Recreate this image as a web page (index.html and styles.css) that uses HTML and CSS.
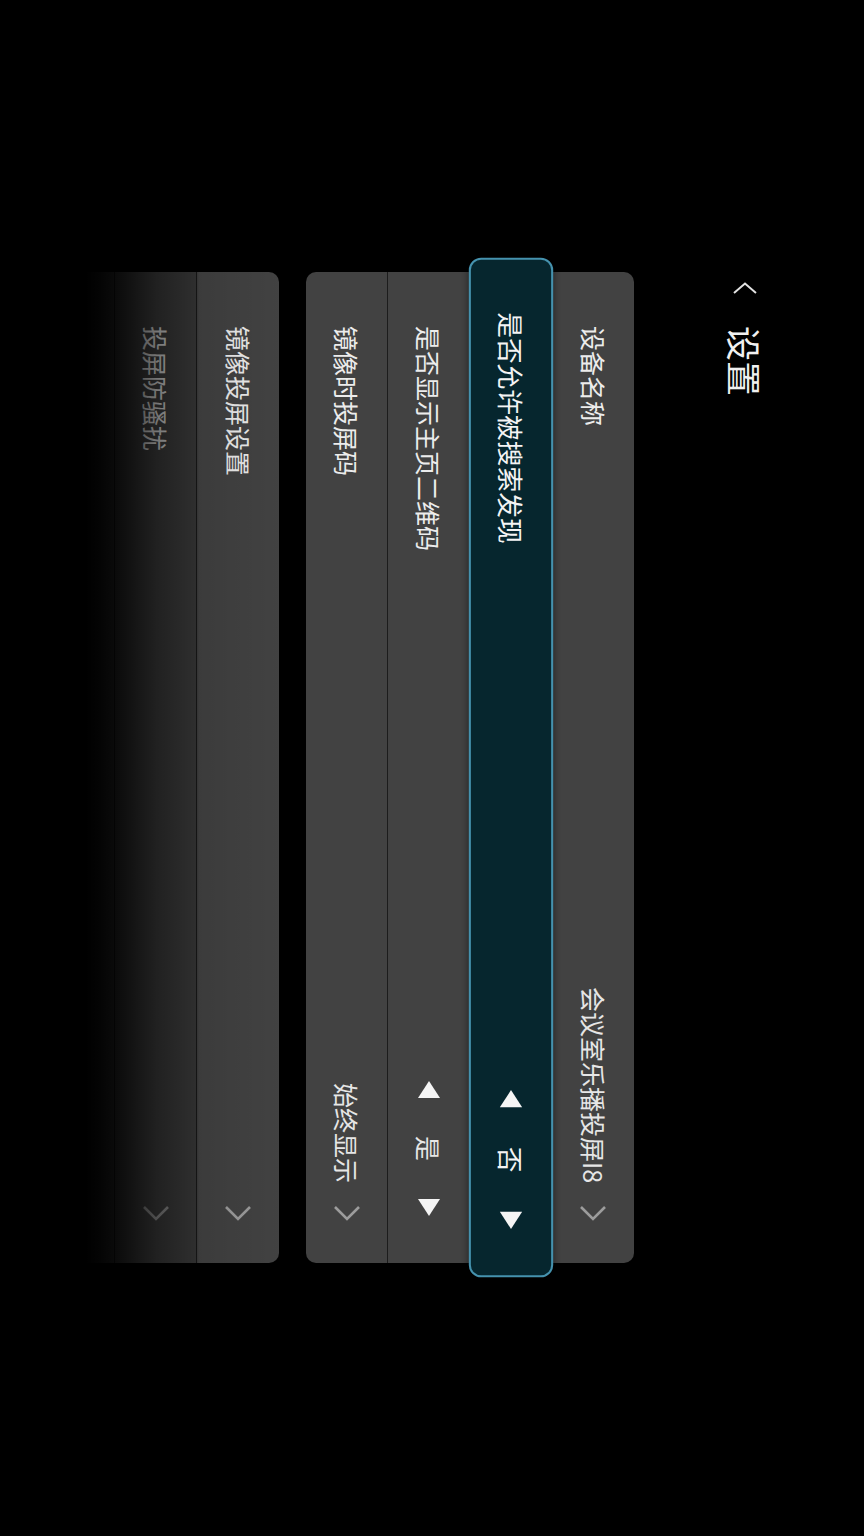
FILE: index.html
```html
<!DOCTYPE html>
<html lang="zh-CN">
<head>
<meta charset="utf-8">
<title>设置</title>
<link rel="stylesheet" href="styles.css">
</head>
<body>
<div class="screen">
  <header class="header">
    <svg class="back" viewBox="0 0 24 12" width="24" height="12"><path d="M1 11 L12 1.5 L23 11"/></svg>
    <h1 class="title">设置</h1>
  </header>

  <section class="group">
    <div class="row">
      <span class="label">设备名称</span>
      <div class="value-wrap">
        <span class="value">会议室乐播投屏I8</span>
        <svg class="chev" viewBox="0 0 28 16" width="28" height="16"><path d="M2 2 L14 14 L26 2"/></svg>
      </div>
    </div>
    <div class="row focused">
      <span class="label">是否允许被搜索发现</span>
      <div class="selector">
        <svg class="tri" viewBox="0 0 22 17" width="22" height="17"><polygon points="0,17 22,17 11,0"/></svg>
        <span class="value">否</span>
        <svg class="tri" viewBox="0 0 22 17" width="22" height="17"><polygon points="0,0 22,0 11,17"/></svg>
      </div>
    </div>
    <div class="row">
      <span class="label">是否显示主页二维码</span>
      <div class="selector">
        <svg class="tri" viewBox="0 0 22 17" width="22" height="17"><polygon points="0,17 22,17 11,0"/></svg>
        <span class="value">是</span>
        <svg class="tri" viewBox="0 0 22 17" width="22" height="17"><polygon points="0,0 22,0 11,17"/></svg>
      </div>
    </div>
    <div class="row">
      <span class="label">镜像时投屏码</span>
      <div class="value-wrap">
        <span class="value">始终显示</span>
        <svg class="chev" viewBox="0 0 28 16" width="28" height="16"><path d="M2 2 L14 14 L26 2"/></svg>
      </div>
    </div>
  </section>

  <section class="group group-2">
    <div class="row">
      <span class="label">镜像投屏设置</span>
      <div class="value-wrap">
        <svg class="chev" viewBox="0 0 28 16" width="28" height="16"><path d="M2 2 L14 14 L26 2"/></svg>
      </div>
    </div>
    <div class="row">
      <span class="label">投屏防骚扰</span>
      <div class="value-wrap">
        <svg class="chev" viewBox="0 0 28 16" width="28" height="16"><path d="M2 2 L14 14 L26 2"/></svg>
      </div>
    </div>
    <div class="row">
      <span class="label"></span>
      <div class="value-wrap">
        <svg class="chev" viewBox="0 0 28 16" width="28" height="16"><path d="M2 2 L14 14 L26 2"/></svg>
      </div>
    </div>
  </section>

  <div class="fade"></div>
</div>
</body>
</html>
```

FILE: styles.css
```css
html, body {
  margin: 0;
  padding: 0;
  background: #000;
}

body {
  width: 864px;
  height: 1536px;
  overflow: hidden;
}

/* The landscape TV screen is shown turned 90deg clockwise:
   vertical-rl with sideways glyphs lays it out in that orientation. */
.screen {
  position: relative;
  writing-mode: vertical-rl;
  text-orientation: sideways;
  width: 864px;
  height: 1536px;
  box-sizing: border-box;
  padding-inline-start: 272px;
  display: flex;
  flex-direction: column;
  background: #000;
  color: #ececec;
  font-family: "Noto Sans CJK SC", "Noto Sans", sans-serif;
  overflow: hidden;
}

.header {
  display: flex;
  align-items: center;
  block-size: 42px;
  margin-block-start: 98px;
}

.back {
  margin-inline-start: 10px;
  fill: none;
  stroke: #e2e2e2;
  stroke-width: 2;
}

.title {
  margin: 0;
  margin-inline-start: 32px;
  font-size: 35px;
  font-weight: 400;
  line-height: 42px;
  color: #f0f0f0;
}

.group {
  inline-size: 991px;
  margin-block-start: 90px;
  background: #424242;
  border-radius: 10px;
  display: flex;
  flex-direction: column;
}

.group-2 {
  margin-block-start: 27px;
}

.row {
  position: relative;
  block-size: 82px;
  box-sizing: border-box;
  display: flex;
  align-items: center;
  padding-inline-start: 54px;
  padding-inline-end: 42px;
  font-size: 25px;
  line-height: 1;
}

.row + .row {
  border-block-start: 1px solid #1c1c1c;
}

.label {
  color: #ececec;
}

.value-wrap {
  margin-inline-start: auto;
  display: flex;
  align-items: center;
  gap: 22px;
}

.value {
  color: #e6e6e6;
}

.chev {
  fill: none;
  stroke: #9c9c9c;
  stroke-width: 2.6;
}

.selector {
  margin-inline-start: auto;
  margin-inline-end: 5px;
  display: flex;
  align-items: center;
  gap: 38px;
}

.tri {
  fill: #f5f5f5;
}

.row.focused {
  z-index: 1;
  background: #06262e;
  border: 2px solid #4592ae;
  border-radius: 12px;
  padding-inline-start: 51px;
  padding-inline-end: 40px;
  transform: scale(1.029);
  box-shadow: 0 0 6px rgba(0, 0, 0, 0.45);
}

.row.focused .label,
.row.focused .value {
  color: #f4f4f4;
}

.fade {
  position: absolute;
  left: 0;
  top: 0;
  bottom: 0;
  width: 284px;
  z-index: 2;
  pointer-events: none;
  background: linear-gradient(to left,
    rgba(0, 0, 0, 0) 0px,
    rgba(0, 0, 0, 0.1) 85px,
    rgba(0, 0, 0, 0.3) 88px,
    rgba(0, 0, 0, 0.5) 127px,
    rgba(0, 0, 0, 0.82) 165px,
    rgba(0, 0, 0, 0.94) 184px,
    #000 198px);
}
```
